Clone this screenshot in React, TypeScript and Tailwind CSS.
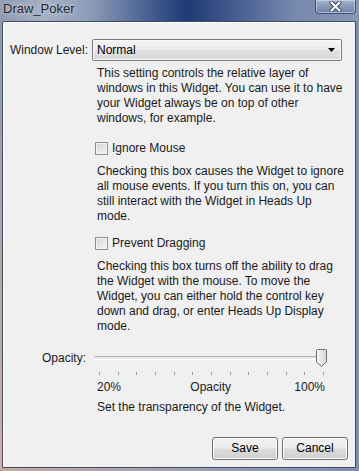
import React from "react";

const desc = "ml-[89px] pl-[5px] leading-[15px] whitespace-nowrap text-[#1a1a1a]";

function Checkbox() {
  return (
    <span className="inline-block w-[13px] h-[13px] border border-[#8e8f8f] bg-[linear-gradient(135deg,#d4d4d4_0%,#f4f4f4_100%)] shadow-[inset_0_0_0_1px_#f4f4f4]" />
  );
}

function Button({ label }: { label: string }) {
  return (
    <button className="w-[66px] h-[23px] rounded-[3px] border border-[#707070] bg-[linear-gradient(#f2f2f2_0%,#ebebeb_48%,#dddddd_52%,#cfcfcf_100%)] shadow-[inset_0_0_0_1px_#fbfbfb] text-[12px] leading-[15px] text-black">
      {label}
    </button>
  );
}

export default function App() {
  const ticks = Array.from({ length: 13 });

  return (
    <div
      className="w-[359px] h-[471px] flex flex-col overflow-hidden bg-[linear-gradient(90deg,#c9a89c_0%,#a8a4b0_40%,#7d8fb0_100%)] text-[12px]"
      style={{ fontFamily: '"Liberation Sans", Arial, sans-serif' }}
    >
      {/* Title bar */}
      <div className="h-[21px] flex items-start justify-between bg-[linear-gradient(90deg,#8d9ab0_0%,#a3afc3_12%,#8e9db7_25%,#4d6494_40%,#1e3b75_52%,#445b8f_65%,#7789ad_82%,#8796b3_100%)]">
        <span className="pl-[3px] pt-[1px] text-[13px] leading-[16px] text-[#2b2b2b] [text-shadow:0_0_6px_rgba(235,240,248,0.95)]">
          Draw_Poker
        </span>
        <div className="mr-[3px] w-[41px] h-[14px] rounded-b-[4px] border border-t-0 border-[#3f5078] bg-[linear-gradient(#a7b4cb_0%,#8899b8_50%,#7083a8_100%)] shadow-[inset_0_0_0_1px_rgba(220,228,240,0.55)] flex items-center justify-center">
          <svg width="13" height="11" viewBox="0 0 13 11">
            <path d="M2.5 1.5 L10.5 9.5 M10.5 1.5 L2.5 9.5" stroke="#3a4660" strokeWidth="4" strokeLinecap="round" />
            <path d="M2.5 1.5 L10.5 9.5 M10.5 1.5 L2.5 9.5" stroke="#ffffff" strokeWidth="2.2" strokeLinecap="round" />
          </svg>
        </div>
      </div>

      <div className="flex flex-1">
        <div className="w-[2px] bg-[linear-gradient(#8d9ab0,#b8a6a4_55%,#d6b0a0)]" />
        {/* Content */}
        <div className="w-[354px] h-[447px] rounded-t-[2px] border border-[#3d4a60] bg-[#f0f0f0] shadow-[inset_1px_1px_0_#ffffff] pt-[17px]">
          <div className="flex items-center">
            <span className="w-[89px] pr-[4px] text-right leading-[15px] text-[#1a1a1a]">Window Level:</span>
            <div className="w-[250px] h-[22px] rounded-[2px] border border-[#7a7a7a] bg-[linear-gradient(#f4f4f4_0%,#ececec_50%,#e2e2e2_51%,#d8d8d8_100%)] shadow-[inset_0_0_0_1px_#fafafa] flex items-center justify-between pl-[4px] pr-[6px]">
              <span className="leading-[15px] text-black">Normal</span>
              <svg width="7" height="4" viewBox="0 0 7 4">
                <path d="M0 0 H7 L3.5 4 Z" fill="#000" />
              </svg>
            </div>
          </div>

          <p className={`${desc} mt-[5px]`}>
            This setting controls the relative layer of<br />
            windows in this Widget. You can use it to have<br />
            your Widget always be on top of other<br />
            windows, for example.
          </p>

          <label className="ml-[89px] pl-[3px] mt-[15px] flex items-center gap-[4px] leading-[15px] text-[#1a1a1a]">
            <Checkbox />
            <span>Ignore Mouse</span>
          </label>

          <p className={`${desc} mt-[8px]`}>
            Checking this box causes the Widget to ignore<br />
            all mouse events. If you turn this on, you can<br />
            still interact with the Widget in Heads Up<br />
            mode.
          </p>

          <label className="ml-[89px] pl-[3px] mt-[12px] flex items-center gap-[4px] leading-[15px] text-[#1a1a1a]">
            <Checkbox />
            <span>Prevent Dragging</span>
          </label>

          <p className={`${desc} mt-[8px]`}>
            Checking this box turns off the ability to drag<br />
            the Widget with the mouse. To move the<br />
            Widget, you can either hold the control key<br />
            down and drag, or enter Heads Up Display<br />
            mode.
          </p>

          {/* Slider */}
          <div className="mt-[15px] flex items-center h-[18px]">
            <span className="w-[89px] pr-[6px] text-right leading-[15px] text-[#1a1a1a]">Opacity:</span>
            <div className="relative ml-[2px] w-[232px] h-[18px] flex items-center">
              <div className="w-full h-[4px] border-t border-[#b3b3b3] border-b border-b-white bg-[#e6e8ea]" />
              <svg className="absolute right-[-1px] top-0" width="11" height="18" viewBox="0 0 11 18">
                <defs>
                  <linearGradient id="thumb" x1="0" y1="0" x2="1" y2="0">
                    <stop offset="0" stopColor="#f7f7f7" />
                    <stop offset="1" stopColor="#d6d6d6" />
                  </linearGradient>
                </defs>
                <path d="M1.5 0.5 H9.5 Q10.5 0.5 10.5 1.5 V13 L5.5 17.5 L0.5 13 V1.5 Q0.5 0.5 1.5 0.5 Z" fill="url(#thumb)" stroke="#6f6f6f" />
              </svg>
            </div>
          </div>

          <div className="ml-[96px] mt-[5px] w-[225px] h-[3px] flex justify-between">
            {ticks.map((_, i) => (
              <span key={i} className="w-px h-[3px] bg-[#9a9a9a]" />
            ))}
          </div>

          <div className="ml-[94px] mt-[5px] w-[228px] flex justify-between leading-[15px] text-[#1a1a1a]">
            <span>20%</span>
            <span className="pl-[6px]">Opacity</span>
            <span>100%</span>
          </div>

          <p className={`${desc} mt-[5px]`}>Set the transparency of the Widget.</p>

          <div className="mt-[22px] flex justify-end gap-[4px] pr-[7px]">
            <Button label="Save" />
            <Button label="Cancel" />
          </div>
        </div>
        <div className="flex-1" />
      </div>
      <div className="h-[3px]" />
    </div>
  );
}
